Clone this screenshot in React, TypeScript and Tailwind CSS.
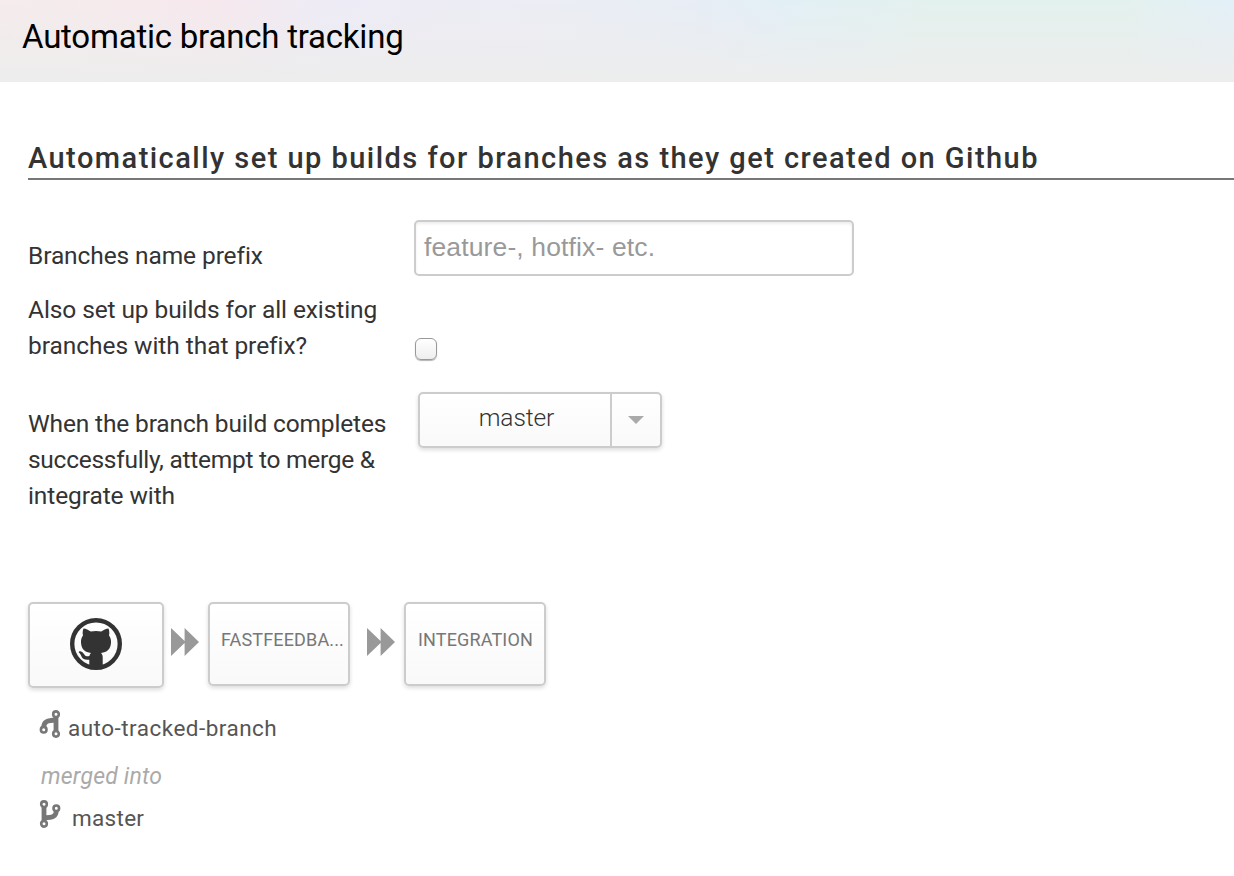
import type { ReactNode } from 'react';

function Octocat() {
  return (
    <svg className="block h-[52px] w-[52px]" viewBox="0 0 52 52" fill="#333">
      <circle cx="26" cy="26" r="23.8" fill="none" stroke="#333" strokeWidth="4.4" />
      <path d="M13.500 10.500C16 10.500 18.500 12 20.700 13.600C24 12.900 28 12.900 31.300 13.600C33.500 12 36 10.500 38.500 10.500C39.500 13 39.500 15.500 39 17.500C40.500 19.500 41.200 21.800 41 24.800C40.600 31.500 37 34.300 31 35C32.200 36.200 32.700 37.600 32.700 39.300V50H19.300V41.700C15 42.300 12.700 41 11.500 38.500C10.800 36.700 10 35.500 9 34.800C8.200 33.800 9.500 33 11 33.500C12.700 34 13.500 35.300 14.500 36.700C15.600 38.300 17 38.700 19.400 38C19.600 36.800 20.100 35.800 21 35C15 34.300 11.400 31.500 11 24.800C10.800 21.800 11.500 19.500 13 17.500C12.500 15.500 12.500 13 13.500 10.500Z" />
    </svg>
  );
}

function FastForward() {
  return (
    <svg className="block h-[28px] w-[28px]" viewBox="0 0 28 28" fill="#999">
      <path d="M0 0L13.600 13V0L28 14L13.600 28V15L0 28Z" />
    </svg>
  );
}

function BranchIcon({ flipped = false }: { flipped?: boolean }) {
  return (
    <svg
      className={flipped ? 'block h-[28px] w-[22px] rotate-180' : 'block h-[28px] w-[22px]'}
      viewBox="0 0 22 28"
      fill="none"
      stroke="#777"
    >
      <path d="M5 6V22M17.300 10.500C17.300 16.800 13.500 17.600 5 18" strokeWidth="4.800" />
      <circle cx="5" cy="4.200" r="2.800" fill="#fff" strokeWidth="2.600" />
      <circle cx="5" cy="23.800" r="2.800" fill="#fff" strokeWidth="2.600" />
      <circle cx="17.300" cy="8.300" r="2.800" fill="#fff" strokeWidth="2.600" />
    </svg>
  );
}

function Card({ children, className }: { children: ReactNode; className: string }) {
  return (
    <div
      className={`rounded-[5px] border-2 border-[#ccc] bg-linear-to-b from-white to-[#f9f9f9] shadow-[0_2px_4px_rgba(0,0,0,0.14)] ${className}`}
    >
      {children}
    </div>
  );
}

export default function App() {
  return (
    <div className="h-[876px] w-[1234px] overflow-hidden bg-white font-['Roboto',sans-serif] text-[#333]">
      <header className="h-[82px] bg-[linear-gradient(to_bottom,rgba(237,237,237,0)_0%,rgba(237,237,237,0.5)_50%,#ededed_100%),linear-gradient(to_right,#f5ecec_0%,#f7e8ed_17%,#eeebf6_26%,#ecedf5_45%,#e8edf6_56%,#e2f0f6_64%,#e3f1ee_75%,#e3f1ee_91%,#e3f0f8_100%)] pt-[17px] pl-[22px]">
        <h1 className="text-[33px] leading-[40px] tracking-[-0.22px] whitespace-nowrap text-black">
          Automatic branch tracking
        </h1>
      </header>

      <main className="pl-[28px]">
        <h2 className="mt-[56px] h-[42px] border-b-2 border-[#777] pt-px text-[29px] leading-[39px] font-medium tracking-[1.46px] whitespace-nowrap">
          Automatically set up builds for branches as they get created on Github
        </h2>

        <form className="text-[24.500px] leading-[36px] tracking-[-0.1px]">
          <div className="flex pt-[40px]">
            <label className="w-[386px] pt-[18px]">Branches name prefix</label>
            <input
              className="h-[56px] w-[440px] rounded-[5px] border-2 border-[#ccc] px-[8px] pb-[2px] font-['Liberation_Sans',sans-serif] text-[26.500px] tracking-[0.13px] shadow-[inset_0_2px_3px_rgba(0,0,0,0.07)] placeholder:text-[#999]"
              placeholder="feature-, hotfix- etc."
            />
          </div>
          <div className="flex pt-[16px]">
            <label className="w-[386px] whitespace-nowrap">
              Also set up builds for all existing
              <br />
              <span className="tracking-[-0.05px]">branches with that prefix?</span>
            </label>
            <input
              type="checkbox"
              className="mt-[46px] ml-px h-[22px] w-[22px] appearance-none rounded-[6px] border-[1.500px] border-[#999] bg-linear-to-b from-white to-[#eee] shadow-[0_1px_1px_rgba(0,0,0,0.3)]"
            />
          </div>
          <div className="flex pt-[28px]">
            <label className="w-[390px] pt-[14px] whitespace-nowrap">
              <span className="tracking-[-0.15px]">When the branch build completes</span>
              <br />
              <span className="tracking-[-0.27px]">successfully, attempt to merge &amp;</span>
              <br />
              integrate with
            </label>
            <Card className="flex h-[56px] w-[244px]">
              <span className="w-[192px] border-r-2 border-[#ccc] pt-[6px] pl-[3px] text-center font-light">master</span>
              <span className="flex flex-1 items-center justify-center">
                <svg className="block h-[8px] w-[16px]" viewBox="0 0 16 8" fill="#aaa">
                  <path d="M0 0H16L8 8Z" />
                </svg>
              </span>
            </Card>
          </div>
        </form>

        <section className="mt-[88px] flex h-[88px] items-start text-[18px] tracking-[0.15px] text-[#777]">
          <Card className="flex h-[86px] w-[136px] items-center justify-center pb-[2px]">
            <Octocat />
          </Card>
          <div className="mt-[26px] mr-[9px] ml-[7px]">
            <FastForward />
          </div>
          <Card className="h-[84px] w-[142px] pt-[22px] pl-[11px] leading-[28px] whitespace-nowrap">FASTFEEDBA...</Card>
          <div className="mt-[26px] mr-[9px] ml-[17px]">
            <FastForward />
          </div>
          <Card className="h-[84px] w-[142px] pt-[22px] pl-[12px] leading-[28px] whitespace-nowrap">INTEGRATION</Card>
        </section>

        <section className="pl-[11px] text-[22.500px] leading-[32px] text-[#555]">
          <div className="flex h-[53px] pt-[20px]">
            <BranchIcon flipped />
            <span className="mt-[2px] ml-[7px] tracking-[0.48px]">auto-tracked-branch</span>
          </div>
          <div className="mt-[18px] pl-[2px] text-[23px] tracking-[0.22px] text-[#aaa] italic">merged into</div>
          <div className="mt-[7px] flex">
            <BranchIcon />
            <span className="mt-[2px] ml-[11px] tracking-[0.3px]">master</span>
          </div>
        </section>
      </main>
    </div>
  );
}
